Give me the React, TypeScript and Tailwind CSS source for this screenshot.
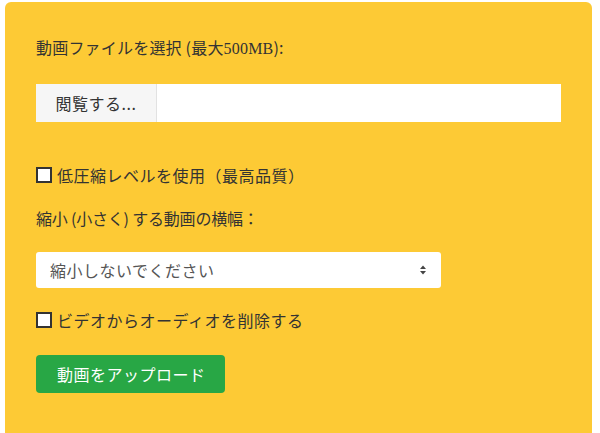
import React from "react";

const jp = "font-['Noto_Sans_CJK_JP',_'Noto_Sans',_sans-serif]";

export default function App() {
  return (
    <div className={"h-[433px] bg-white overflow-hidden " + jp}>
      <div className="ml-[5px] mt-[2px] w-[587px] h-[440px] rounded-md bg-[#fdca35] pl-[31px] pt-[33px] text-[16px] text-[#333] tracking-[0.5px]">
        <div className="leading-[24px] tracking-[0.2px]">
          動画ファイルを選択 (最大<span className="font-['Liberation_Serif',_serif]">500MB</span>):
        </div>

        <div className="mt-[23px] flex h-[38px] w-[525px] bg-white">
          <div className="flex w-[121px] items-center justify-center border-r border-[#e2e2e2] bg-[#f6f6f6] text-[#333]">
            閲覧する...
          </div>
          <div className="flex-1" />
        </div>

        <label className="mt-[41px] flex h-[24px] items-center gap-[5px]">
          <span className="h-[16px] w-[16px] border-2 border-[#333] bg-white" />
          <span>低圧縮レベルを使用（最高品質）</span>
        </label>

        <div className="mt-[19px] leading-[24px] tracking-[-0.2px]">縮小 (小さく) する動画の横幅：</div>

        <div className="mt-[22px] flex h-[36px] w-[405px] items-center justify-between rounded-[3px] bg-white pl-[14px] pr-[14px] text-[#555]">
          <span>縮小しないでください</span>
          <svg width="8" height="10" viewBox="0 0 8 10">
            <path d="M4 0.5 L7 4 L1 4 Z" fill="#444" />
            <path d="M4 9.5 L7 6 L1 6 Z" fill="#444" />
          </svg>
        </div>

        <label className="mt-[20px] flex h-[24px] items-center gap-[5px]">
          <span className="h-[16px] w-[16px] border-2 border-[#333] bg-white" />
          <span>ビデオからオーディオを削除する</span>
        </label>

        <button className="mt-[23px] flex h-[38px] w-[189px] items-center rounded-[4px] bg-[#28a745] pl-[21px] text-white tracking-[0.5px]">
          動画をアップロード
        </button>
      </div>
    </div>
  );
}
